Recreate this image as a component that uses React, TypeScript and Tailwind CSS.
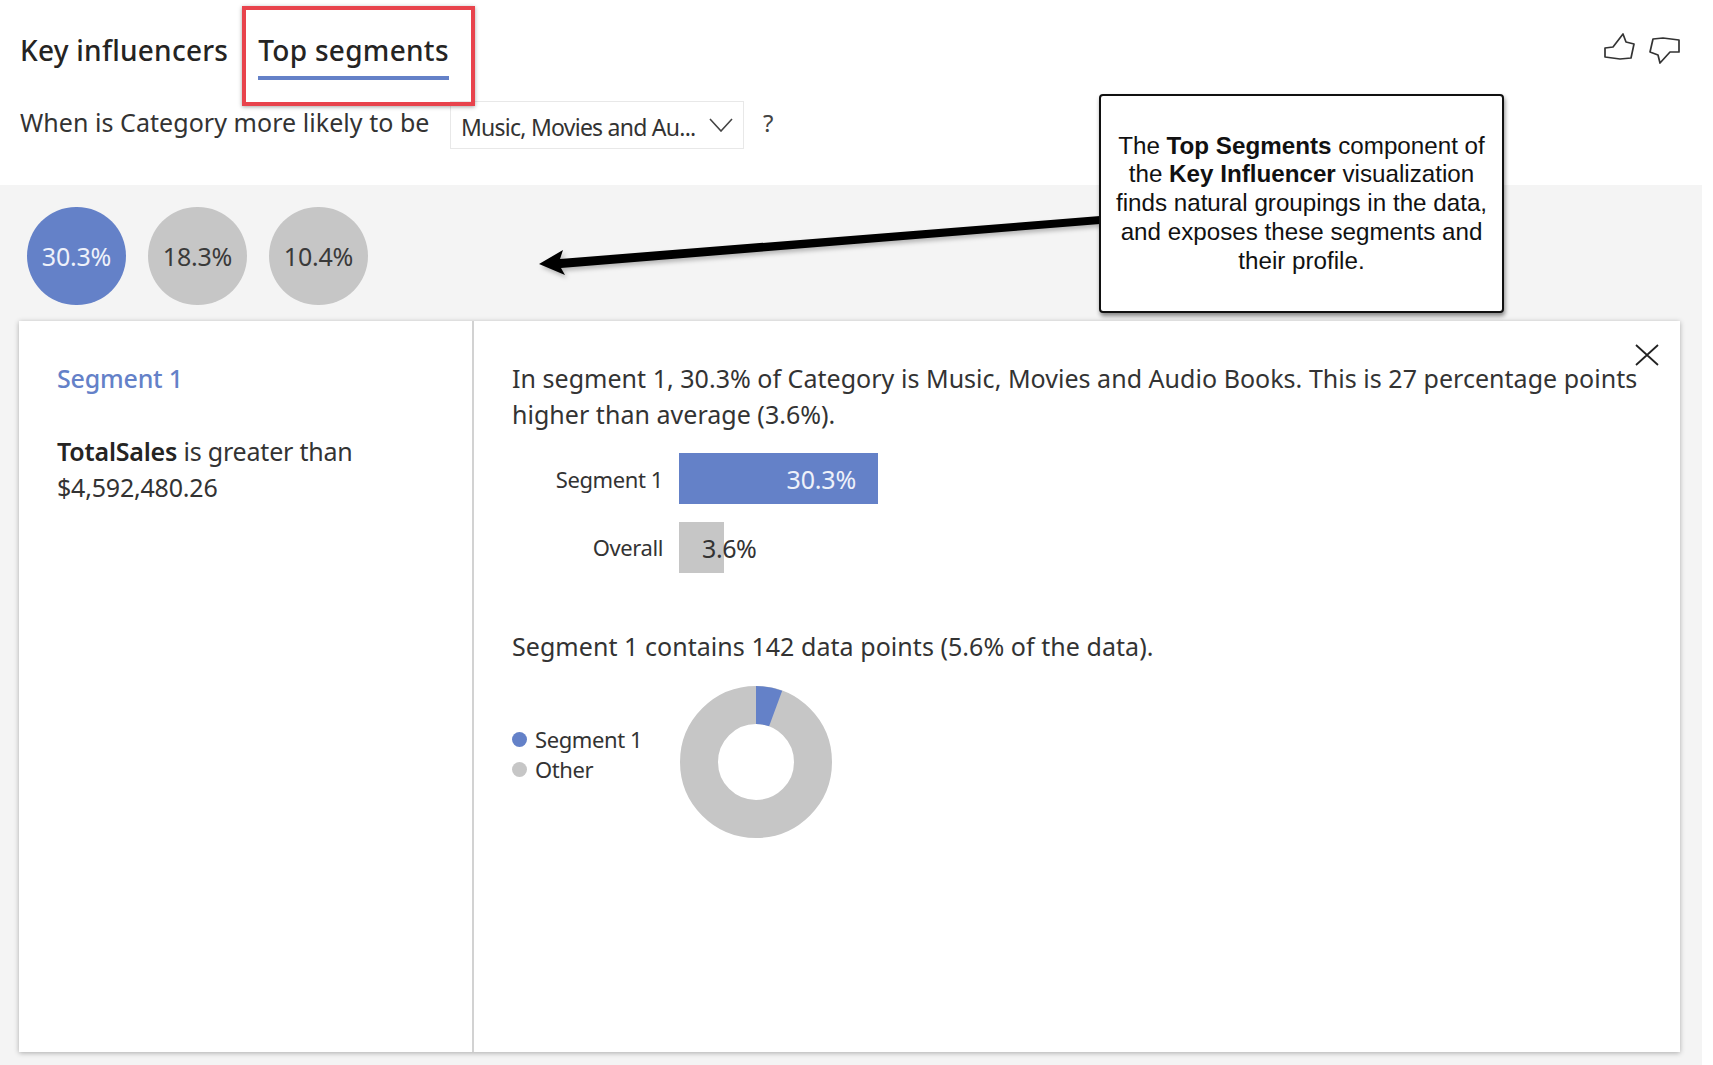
import React from "react";

const sans = "font-['Noto_Sans',sans-serif]";

function ThumbUp() {
  return (
    <svg width="32" height="28" viewBox="0 0 32 28" fill="none" stroke="#333" strokeWidth="1.7" strokeLinejoin="round" strokeLinecap="round">
      <path d="M1 15 L9 14 L19 1 L22 9 L30 11 L27 25 L16 26 L1 24 Z" />
    </svg>
  );
}

function ThumbDown() {
  return (
    <svg width="32" height="28" viewBox="0 0 32 28" fill="none" stroke="#333" strokeWidth="1.7" strokeLinejoin="round" strokeLinecap="round">
      <path d="M4 2 L14 1 L30 3 L30 15 L21 15 L11 26 L9 18 L1 15 Z" />
    </svg>
  );
}

function Donut() {
  const cx = 76, cy = 76, R = 76, r = 38;
  const a = 2 * Math.PI * 0.056;
  const x1 = cx + R * Math.sin(a), y1 = cy - R * Math.cos(a);
  const x2 = cx + r * Math.sin(a), y2 = cy - r * Math.cos(a);
  return (
    <svg width="152" height="152" viewBox="0 0 152 152">
      <circle cx={cx} cy={cy} r={57} fill="none" stroke="#c6c6c6" strokeWidth={38} />
      <path d={`M${cx} ${cy - R} A${R} ${R} 0 0 1 ${x1} ${y1} L${x2} ${y2} A${r} ${r} 0 0 0 ${cx} ${cy - r} Z`} fill="#6481c8" />
    </svg>
  );
}

function Circle({ label, active }: { label: string; active?: boolean }) {
  return (
    <div className={active
      ? "w-[99px] h-[98px] rounded-full bg-[#6481c8] text-[#eef1fa] flex items-center justify-center pt-[2px] text-[25px] tracking-[-0.2px]"
      : "w-[99px] h-[98px] rounded-full bg-[#c6c6c6] text-[#3a3a3a] flex items-center justify-center pt-[2px] text-[25px] tracking-[-0.2px]"}>
      {label}
    </div>
  );
}

export default function App() {
  return (
    <div className={`relative w-[1713px] h-[1065px] bg-white overflow-hidden flex flex-col text-[#2b2b2b] ${sans}`}>
      <header className="relative h-[185px] shrink-0 pl-[20px]">
        <div className="flex items-start pt-[28px] gap-[30px]">
          <div className="text-[28px] leading-[44px] font-medium text-[#252423] tracking-[0.25px]">Key influencers</div>
          <div className="flex flex-col">
            <div className="text-[28px] leading-[44px] font-medium text-[#252423] tracking-[0.3px]">Top segments</div>
            <div className="mt-[4px] h-[4px] bg-[#6481c8]" />
          </div>
        </div>
        <div className="flex items-center mt-[21px] h-[48px]">
          <span className="w-[430px] text-[25px] tracking-[0.05px] text-[#333] whitespace-nowrap -translate-y-[2px]">When is Category more likely to be</span>
          <div className="w-[294px] h-[48px] border border-[#e8e8e8] flex items-center pl-[10px] text-[23px] tracking-[-0.75px] text-[#333] whitespace-nowrap">
            <span className="w-[248px] translate-y-[2px]">Music, Movies and Au...</span>
            <svg width="24" height="14" viewBox="0 0 24 14" fill="none" stroke="#444" strokeWidth="1.6"><path d="M1 1 L12 13 L23 1" /></svg>
          </div>
          <span className="ml-[19px] text-[24px] text-[#444] -translate-y-[2px]">?</span>
        </div>
        <div className="absolute right-[32px] top-[33px] flex items-start gap-[13px]">
          <ThumbUp />
          <div className="mt-[4px]"><ThumbDown /></div>
        </div>
      </header>

      <main className="flex-1 w-[1702px] bg-[#f4f4f4] flex flex-col">
        <div className="flex gap-[22px] pl-[27px] pt-[22px]">
          <Circle label="30.3%" active />
          <Circle label="18.3%" />
          <Circle label="10.4%" />
        </div>
        <section className="relative ml-[19px] mt-[16px] w-[1661px] h-[731px] bg-white flex shadow-[0_1px_5px_rgba(0,0,0,0.3)]">
          <aside className="w-[455px] shrink-0 border-r-2 border-[#d2d2d2] pl-[38px] pt-[39px] text-[25px] leading-[36px] tracking-[-0.2px]">
            <div className="font-medium text-[#6481c8]">Segment 1</div>
            <div className="mt-[37px] text-[#333]"><span className="font-semibold text-[#252423]">TotalSales</span> is greater than<br />$4,592,480.26</div>
          </aside>
          <div className="flex-1 pl-[38px] pt-[39px] text-[#333]">
            <p className="text-[25px] leading-[36px] tracking-[0.03px] whitespace-nowrap">
              In segment 1, 30.3% of Category is Music, Movies and Audio Books. This is 27 percentage points<br />higher than average (3.6%).
            </p>
            <div className="mt-[21px] flex flex-col gap-[18px] text-[22px] tracking-[-0.4px]">
              <div className="flex items-center h-[51px]">
                <span className="w-[151px] text-right pt-[2px]">Segment 1</span>
                <div className="ml-[16px] w-[199px] h-[51px] bg-[#6481c8] text-[#eef1fa] text-[25px] tracking-[-0.2px] flex items-center justify-end pr-[22px] pt-[2px]">30.3%</div>
              </div>
              <div className="flex items-center h-[51px]">
                <span className="w-[151px] text-right">Overall</span>
                <div className="ml-[16px] w-[45px] h-[51px] bg-[#c6c6c6] text-[25px] flex items-center pl-[23px] whitespace-nowrap pt-[2px]">3.6%</div>
              </div>
            </div>
            <p className="mt-[55px] text-[25px] leading-[36px] tracking-[0.05px]">Segment 1 contains 142 data points (5.6% of the data).</p>
            <div className="mt-[22px] flex items-start">
              <div className="w-[168px] pt-[38px] text-[22px] tracking-[-0.4px]">
                <div className="flex items-center gap-[8px] h-[30px]"><span className="w-[15px] h-[15px] rounded-full bg-[#6481c8]" />Segment 1</div>
                <div className="flex items-center gap-[8px] h-[30px]"><span className="w-[15px] h-[15px] rounded-full bg-[#c6c6c6]" />Other</div>
              </div>
              <Donut />
            </div>
          </div>
          <svg className="absolute left-[1616px] top-[23px]" width="24" height="22" viewBox="0 0 24 22" fill="none" stroke="#222" strokeWidth="1.8"><path d="M1 1 L23 21 M23 1 L1 21" /></svg>
        </section>
      </main>

      <div className="absolute left-[242px] top-[6px] w-[233px] h-[100px] border-[4px] border-[#e8434c] shadow-[0_1px_4px_rgba(0,0,0,0.35)]" />

      <svg className="absolute left-[530px] top-[205px] drop-shadow-[2px_3px_2px_rgba(0,0,0,0.25)]" width="580" height="80" viewBox="0 0 580 80">
        <path d="M570 11 L30 54 L33 45 L9 59 L35 70 L31 63 L570 19 Z" fill="#000" />
      </svg>

      <div className="absolute left-[1099px] top-[94px] w-[405px] h-[219px] bg-white border-2 border-[#111] rounded-[4px] shadow-[1px_3px_4px_rgba(0,0,0,0.45)] flex items-center justify-center text-center font-['Liberation_Sans',sans-serif] text-[24.2px] leading-[28.7px] text-[#111]">
        <p className="whitespace-nowrap">
          The <b>Top Segments</b> component of<br />
          the <b>Key Influencer</b> visualization<br />
          finds natural groupings in the data,<br />
          and exposes these segments and<br />
          their profile.
        </p>
      </div>
    </div>
  );
}
